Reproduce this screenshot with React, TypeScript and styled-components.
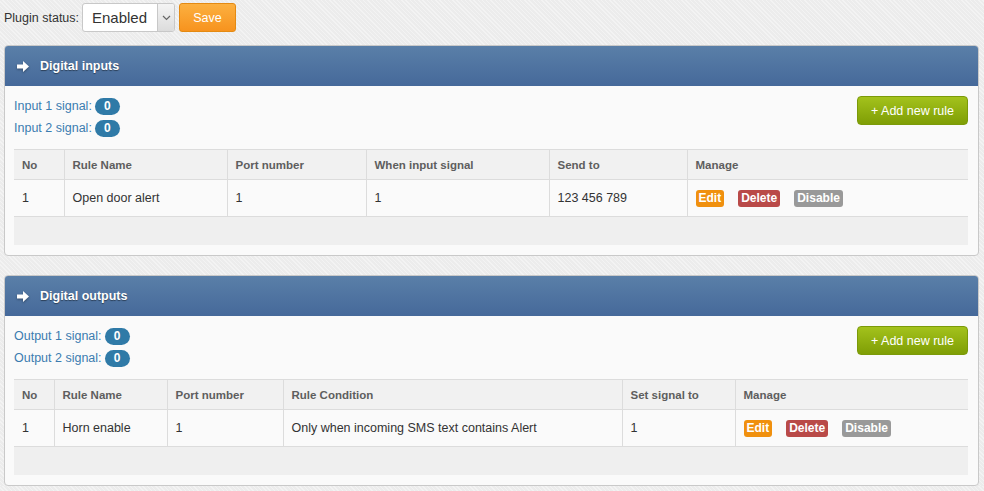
import styled, { createGlobalStyle } from 'styled-components';

const GlobalStyle = createGlobalStyle`
  html, body {
    margin: 0;
    padding: 0;
  }
  body {
    font-family: "Liberation Sans", Arial, Helvetica, sans-serif;
    font-size: 12.5px;
    color: #333;
    background-color: #ececec;
    background-image: repeating-linear-gradient(
      45deg,
      rgba(255, 255, 255, 0.35) 0px,
      rgba(255, 255, 255, 0.35) 1px,
      transparent 1px,
      transparent 3px
    );
  }
`;

type Column = { title: string; width: number };

type Rule = {
  cells: string[];
};

type Section = {
  title: string;
  signalLabel: string;
  columns: Column[];
  rules: Rule[];
};

const sections: Section[] = [
  {
    title: 'Digital inputs',
    signalLabel: 'Input',
    columns: [
      { title: 'No', width: 50 },
      { title: 'Rule Name', width: 163 },
      { title: 'Port number', width: 139 },
      { title: 'When input signal', width: 183 },
      { title: 'Send to', width: 138 },
      { title: 'Manage', width: 281 },
    ],
    rules: [{ cells: ['1', 'Open door alert', '1', '1', '123 456 789'] }],
  },
  {
    title: 'Digital outputs',
    signalLabel: 'Output',
    columns: [
      { title: 'No', width: 40 },
      { title: 'Rule Name', width: 113 },
      { title: 'Port number', width: 116 },
      { title: 'Rule Condition', width: 339 },
      { title: 'Set signal to', width: 113 },
      { title: 'Manage', width: 233 },
    ],
    rules: [
      { cells: ['1', 'Horn enable', '1', 'Only when incoming SMS text contains Alert', '1'] },
    ],
  },
];

export default function App() {
  return (
    <Page>
      <GlobalStyle />
      <StatusBar>
        <StatusLabel>Plugin status:</StatusLabel>
        <SelectBox>
          <span>Enabled</span>
          <SelectArrow>
            <svg width="9" height="6" viewBox="0 0 9 6">
              <path d="M1 1 L4.5 4.5 L8 1" fill="none" stroke="#666" strokeWidth="1.2" />
            </svg>
          </SelectArrow>
        </SelectBox>
        <SaveButton>Save</SaveButton>
      </StatusBar>

      {sections.map((section) => (
        <Panel key={section.title}>
          <PanelHeader>
            <svg width="12" height="11" viewBox="0 0 12 11">
              <path d="M0 3.5 H6 V0 L12 5.5 L6 11 V7.5 H0 Z" fill="#fff" />
            </svg>
            <span>{section.title}</span>
          </PanelHeader>
          <PanelBody>
            <TopRow>
              <Signals>
                {[1, 2].map((n) => (
                  <SignalLine key={n}>
                    {section.signalLabel} {n} signal: <Badge>0</Badge>
                  </SignalLine>
                ))}
              </Signals>
              <AddButton>+ Add new rule</AddButton>
            </TopRow>
            <RuleTable>
              <colgroup>
                {section.columns.map((c) => (
                  <col key={c.title} style={{ width: c.width }} />
                ))}
              </colgroup>
              <thead>
                <tr>
                  {section.columns.map((c) => (
                    <th key={c.title}>{c.title}</th>
                  ))}
                </tr>
              </thead>
              <tbody>
                {section.rules.map((rule, i) => (
                  <tr key={i}>
                    {rule.cells.map((cell, j) => (
                      <td key={j}>{cell}</td>
                    ))}
                    <td>
                      <Actions>
                        <Tag $color="#f0900e">Edit</Tag>
                        <Tag $color="#b94a48">Delete</Tag>
                        <Tag $color="#999999">Disable</Tag>
                      </Actions>
                    </td>
                  </tr>
                ))}
                <FooterRow>
                  <td colSpan={section.columns.length} />
                </FooterRow>
              </tbody>
            </RuleTable>
          </PanelBody>
        </Panel>
      ))}
    </Page>
  );
}

const Page = styled.div`
  padding: 3px 5px 0 4px;
  display: flex;
  flex-direction: column;
  gap: 19px;
`;

const StatusBar = styled.div`
  display: flex;
  align-items: center;
  height: 29px;
  margin-bottom: -6px;
  color: #333;
`;

const StatusLabel = styled.span`
  width: 78px;
  font-size: 12.5px;
`;

const SelectBox = styled.div`
  box-sizing: border-box;
  width: 93px;
  height: 29px;
  display: flex;
  align-items: center;
  justify-content: space-between;
  background: #fff;
  border: 1px solid #c8c8c8;
  border-radius: 3px;
  font-size: 15px;
  color: #333;
  padding-left: 9px;
  margin-right: 4px;
`;

const SelectArrow = styled.div`
  width: 16px;
  height: 27px;
  display: flex;
  align-items: center;
  justify-content: center;
  border-left: 1px solid #c8c8c8;
  background: linear-gradient(#f4f4f4, #dcdcdc);
  border-radius: 0 2px 2px 0;
`;

const SaveButton = styled.button`
  box-sizing: border-box;
  width: 57px;
  height: 29px;
  border: 1px solid #e48a12;
  border-radius: 3px;
  background: linear-gradient(#fcb040, #f7931e);
  color: #fff;
  font-family: inherit;
  font-size: 12.5px;
  padding: 0;
`;

const Panel = styled.div`
  border: 1px solid #c9c9c9;
  border-radius: 4px;
  background: #fafafa;
  overflow: hidden;
`;

const PanelHeader = styled.div`
  height: 40px;
  display: flex;
  align-items: center;
  gap: 11px;
  padding-left: 12px;
  background: linear-gradient(#5a7fa8, #46699a);
  color: #fff;
  font-weight: bold;
  font-size: 12.5px;
  text-shadow: 0 1px 1px rgba(0, 0, 0, 0.45);

  svg {
    filter: drop-shadow(0 1px 1px rgba(0, 0, 0, 0.35));
  }
`;

const PanelBody = styled.div`
  padding: 9px 10px 10px 9px;
`;

const TopRow = styled.div`
  display: flex;
  justify-content: space-between;
  align-items: flex-start;
  margin-bottom: 10px;
`;

const Signals = styled.div`
  display: flex;
  flex-direction: column;
`;

const SignalLine = styled.div`
  height: 22px;
  display: flex;
  align-items: center;
  gap: 3px;
  color: #3b7cb0;
  font-size: 12.5px;
`;

const Badge = styled.span`
  display: inline-flex;
  align-items: center;
  justify-content: center;
  min-width: 25px;
  height: 17px;
  border-radius: 9px;
  background: #2f7aa7;
  color: #fff;
  font-weight: bold;
  font-size: 12px;
`;

const AddButton = styled.button`
  box-sizing: border-box;
  width: 111px;
  height: 29px;
  margin-top: 1px;
  border: 1px solid #7b9a09;
  border-radius: 4px;
  background: linear-gradient(#a3c21c, #7f9e05);
  color: #fff;
  font-family: inherit;
  font-size: 12.5px;
  padding: 0;
`;

const RuleTable = styled.table`
  width: 100%;
  border-collapse: collapse;
  table-layout: fixed;
  font-size: 12.5px;

  th,
  td {
    text-align: left;
    padding: 0 8px;
    border-left: 1px solid #dcdcdc;
    border-top: 1px solid #dcdcdc;
  }

  th:first-child,
  td:first-child {
    border-left: none;
  }

  th {
    height: 29px;
    background: #f1f1f1;
    color: #5e5e5e;
    font-weight: bold;
    font-size: 11.5px;
  }

  td {
    height: 36px;
    color: #333;
    background: #fafafa;
  }
`;

const FooterRow = styled.tr`
  td {
    height: 28px;
    background: #efefef;
    border-left: none;
  }
`;

const Actions = styled.div`
  display: flex;
  gap: 14px;
`;

const Tag = styled.span<{ $color: string }>`
  display: inline-flex;
  align-items: center;
  height: 17px;
  padding: 0 3px;
  border-radius: 3px;
  background: ${(p) => p.$color};
  color: #fff;
  font-weight: bold;
  font-size: 12px;
`;
